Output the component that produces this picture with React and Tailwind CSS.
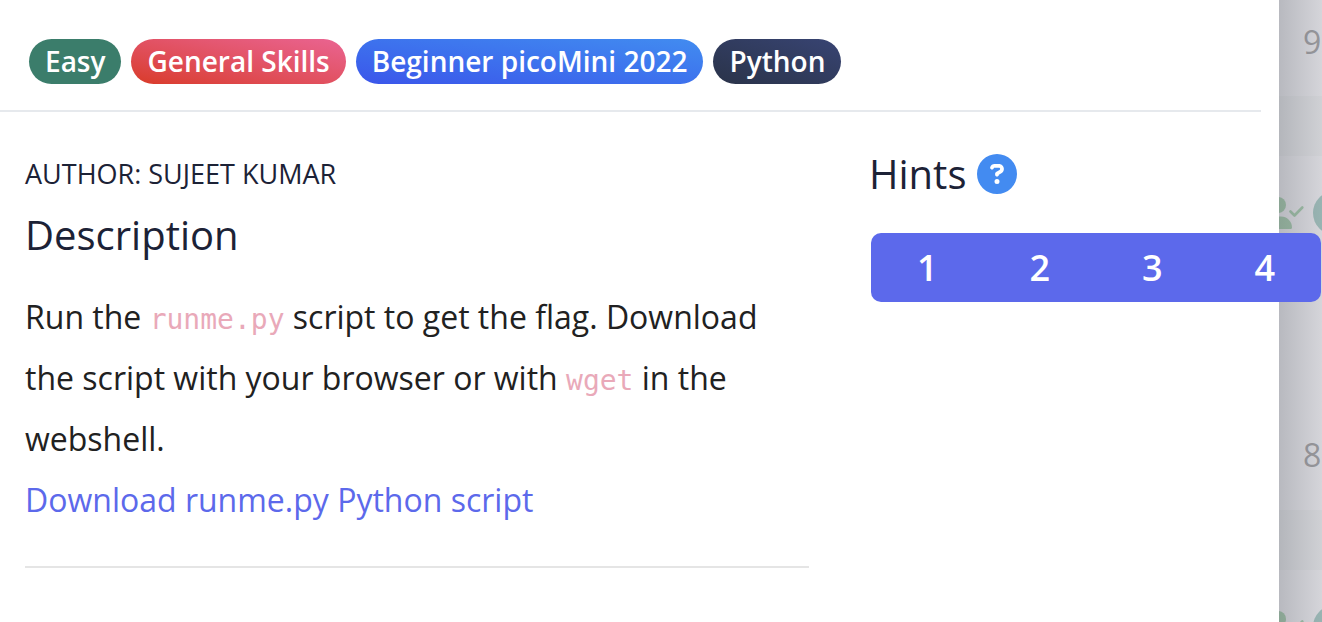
import { FaCircleQuestion } from "react-icons/fa6";

const tags = [
  { label: "Easy", style: "bg-[#3b7d6b]" },
  { label: "General Skills", style: "bg-linear-to-tr from-[#d93a26] to-[#ea6492]" },
  { label: "Beginner picoMini 2022", style: "bg-linear-to-tr from-[#3b55ea] to-[#428cf0]" },
  { label: "Python", style: "bg-linear-to-tr from-[#2a3349] to-[#384473]" },
];

const hints = [1, 2, 3, 4];

const cards = [
  { solves: "9", height: "h-[96px]", pad: "pt-5" },
  { solves: "8", height: "h-[354px]", pad: "pt-[277px]" },
  { solves: "", height: "h-[354px]", pad: "pt-[277px]" },
];

function Code({ children }) {
  return (
    <code className="font-['DejaVu_Sans_Mono',monospace] text-[28px] leading-none text-[#e9a9b9]">{children}</code>
  );
}

function UserCheckIcon({ className }) {
  return (
    <svg viewBox="0 0 40 32" className={className} fill="currentColor" aria-hidden="true">
      <circle cx="14" cy="8" r="8" />
      <path d="M11 19.5h6a11 11 0 0 1 11 11a1.5 1.5 0 0 1-1.5 1.5h-25A1.5 1.5 0 0 1 0 30.5a11 11 0 0 1 11-11z" />
      <path
        d="M26.5 14.5l4 4l7.8-8"
        fill="none"
        stroke="currentColor"
        strokeWidth="2.6"
        strokeLinecap="round"
        strokeLinejoin="round"
      />
    </svg>
  );
}

function ProblemCard({ solves, height, pad, first }) {
  return (
    <div className="shrink-0">
      <div className={`relative overflow-hidden bg-[#d5d5da] ${height}`}>
        {!first && (
          <div className="absolute top-[35px] -left-[15px] flex items-center gap-[9px]">
            <UserCheckIcon className="h-8 w-10 shrink-0 text-[#9abaa2]" />
            <span className="h-11 w-11 shrink-0 rounded-full bg-[#98b4b2]" />
          </div>
        )}
        <p className={`pl-6 text-[32px] leading-[44px] text-[#96969a] ${pad}`}>{solves}</p>
      </div>
      <div className="h-[60px] bg-[#d0d1d5]" />
    </div>
  );
}

export default function App() {
  return (
    <div className="flex h-screen overflow-hidden bg-white font-['Open_Sans',sans-serif]">
      <main className="relative z-10 min-w-0 flex-1 bg-white">
        <header className="mr-[18px] flex gap-[10px] border-b-2 border-[#e6e9ed] pt-[39px] pb-[26px] pl-[29px]">
          {tags.map((tag) => (
            <span
              key={tag.label}
              className={`h-[45px] rounded-full px-4 text-[28px] leading-[45px] font-semibold whitespace-nowrap text-white ${tag.style}`}
            >
              {tag.label}
            </span>
          ))}
        </header>
        <div className="flex pl-[25px]">
          <section className="min-w-0 flex-1 pt-[42px]">
            <p className="text-[27px] leading-10 text-[#1c2236]">AUTHOR: SUJEET KUMAR</p>
            <h2 className="mt-[15px] text-[40px] leading-[52px] text-[#1c2236]">Description</h2>
            <p className="mt-[25px] text-[32px] leading-[61px] text-[#212121]">
              Run the <Code>runme.py</Code> script to get the flag. Download the script with your browser or with{" "}
              <Code>wget</Code> in the webshell.
              <br />
              <a href="#runme" className="text-[#5c69eb]">
                Download runme.py Python script
              </a>
            </p>
            <hr className="mt-9 border-t-2 border-[#e5e5e5]" />
          </section>
          <section className="ml-[60px] w-[410px] shrink-0 pt-[36px]">
            <h2 className="flex items-center gap-[11px] text-[40px] leading-[52px] text-[#1c2236]">
              Hints
              <FaCircleQuestion className="h-10 w-10 text-[#438bf1]" />
            </h2>
            <div className="mt-[33px] ml-0.5 flex w-[450px] overflow-hidden rounded-[10px] bg-[#5c69eb]">
              {hints.map((n) => (
                <button key={n} type="button" className="h-[69px] flex-1 text-[36px] font-semibold text-white">
                  {n}
                </button>
              ))}
            </div>
          </section>
        </div>
      </main>
      <aside className="relative flex w-[43px] shrink-0 flex-col overflow-hidden">
        {cards.map((card, i) => (
          <ProblemCard key={i} first={i === 0} {...card} />
        ))}
        <div className="absolute inset-0 bg-linear-to-r from-[#50566038] to-[#50566000]" />
      </aside>
    </div>
  );
}
